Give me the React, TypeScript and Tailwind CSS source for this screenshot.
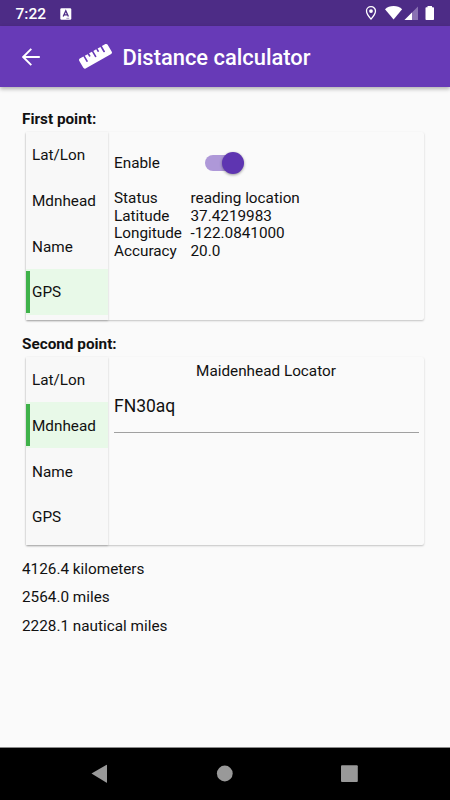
import React from "react";
import { FaRuler } from "react-icons/fa";

const TABS = ["Lat/Lon", "Mdnhead", "Name", "GPS"];

function StatusBar() {
  return (
    <div className="flex h-[26px] items-center bg-[#4d2c86] pl-[15.5px] pr-[15px] text-white">
      <span className="w-[44.5px] pt-[3px] text-[15.5px] font-medium leading-[23px]">7:22</span>
      <svg className="mt-[1px] h-[12px] w-[12px]" viewBox="0 0 12 12">
        <rect x="0.3" y="0.3" width="11" height="11.4" rx="1.2" fill="#fff" />
        <path d="M3.2 8.6 5.8 2.8 8.4 8.6M4.2 6.8h3.2" fill="none" stroke="#4d2c86" strokeWidth="1.3" />
        <path d="M6.4 10.3h2.8" stroke="#4d2c86" strokeWidth="0.5" />
      </svg>
      <div className="flex-1" />
      <svg className="h-[26px] w-[72px]" viewBox="363 0 72 26">
        <path d="M371 6.7c-2.6 0-4.5 2-4.5 4.4 0 3.2 4.5 8 4.5 8s4.5-4.8 4.5-8c0-2.4-1.9-4.4-4.5-4.4z" fill="none" stroke="#fff" strokeWidth="1.3" />
        <circle cx="371" cy="11.1" r="1.9" fill="#fff" />
        <path d="M385 9.2C387.2 7.2 390.2 6 393.6 6s6.4 1.2 8.5 3.2L393.6 19.4z" fill="#fff" />
        <path d="M418 6.5V20H404.5z" fill="#8a72b3" />
        <path d="M412 12.5V20h-7.5z" fill="#fff" />
        <path d="M427.5 7.2V6h4.5v1.2h1.2a.8.8 0 0 1 .8.8v11.2a.8.8 0 0 1-.8.8h-6.9a.8.8 0 0 1-.8-.8V8a.8.8 0 0 1 .8-.8z" fill="#fff" />
      </svg>
    </div>
  );
}

function AppBar() {
  return (
    <header className="relative flex h-[61px] items-center bg-[#673ab7] pl-[22px] text-white shadow-[0_2px_4px_rgba(0,0,0,0.3)]">
      <svg className="h-[18px] w-[18px]" viewBox="0 0 18 18" fill="none" stroke="#fff" strokeWidth="1.9">
        <path d="M17.8 9H1.5M9.3 0.9 1.2 9l8.1 8.1" />
      </svg>
      <FaRuler className="ml-[38.5px] h-[26.5px] w-[33px]" />
      <h1 className="ml-[11px] pt-[2px] text-[21.9px] font-medium leading-[26px]">Distance calculator</h1>
    </header>
  );
}

function PointCard({ title, active, children }: { title: string; active: string; children: React.ReactNode }) {
  return (
    <section>
      <h2 className="h-[21.5px] text-[15.3px] font-bold leading-[18px]">{title}</h2>
      <div className="ml-[4px] mr-[4px] flex h-[188px] rounded-[2px] bg-[#fafafa] shadow-[0_1px_2px_rgba(0,0,0,0.22)]">
        <nav className="mr-[0.6px] w-[82.4px] shrink-0 bg-[#f8f8f8] shadow-[0_1px_2px_rgba(0,0,0,0.2)]">
          {TABS.map((tab) => (
            <div key={tab} className={`flex h-[45.9px] items-center ${tab === active ? "bg-[#e8f9e8]" : ""}`}>
              <span className={`mr-[2.4px] h-[42px] w-[3.6px] ${tab === active ? "bg-[#3fb24a]" : ""}`} />
              <span className="pt-[2.2px]">{tab}</span>
            </div>
          ))}
        </nav>
        <div className="flex-1 px-[5px] pt-[0.5px]">{children}</div>
      </div>
    </section>
  );
}

function Toggle() {
  return (
    <span className="relative block h-[22px] w-[39px]">
      <span className="absolute left-0 top-[3px] h-[16px] w-[36px] rounded-full bg-[#ae98d8]" />
      <span className="absolute right-0 top-0 h-[22px] w-[22px] rounded-full bg-[#5e35b1] shadow-[0_1px_3px_rgba(0,0,0,0.4)]" />
    </span>
  );
}

const READINGS = [
  ["Status", "reading location"],
  ["Latitude", "37.4219983"],
  ["Longitude", "-122.0841000"],
  ["Accuracy", "20.0"],
];

export default function App() {
  return (
    <div className="flex h-[800px] w-[450px] flex-col overflow-hidden bg-[#fafafa] font-[Roboto,sans-serif] text-[15.3px] leading-[17.5px] text-[#111]">
      <StatusBar />
      <AppBar />
      <main className="flex-1 px-[22px] pt-[23px]">
        <PointCard title="First point:" active="GPS">
          <div className="flex h-[58px] items-center pt-[4px]">
            <span className="w-[91px] pt-[2px]">Enable</span>
            <Toggle />
          </div>
          <dl className="grid grid-cols-[76.5px_1fr]">
            {READINGS.map(([name, value]) => (
              <React.Fragment key={name}>
                <dt>{name}</dt>
                <dd>{value}</dd>
              </React.Fragment>
            ))}
          </dl>
        </PointCard>
        <div className="h-[15.5px]" />
        <PointCard title="Second point:" active="Mdnhead">
          <p className="pr-[1px] pt-[6px] text-center">Maidenhead Locator</p>
          <div className="mt-[12px] h-[40px] border-b border-[#a0a0a0] pt-[3px] text-[17.5px] leading-[20px]">FN30aq</div>
        </PointCard>
        <div className="flex flex-col gap-[10.8px] pt-[16.5px]">
          <p>4126.4 kilometers</p>
          <p>2564.0 miles</p>
          <p>2228.1 nautical miles</p>
        </div>
      </main>
      <footer className="h-[53px] border-t border-[#8a8a8a] bg-black">
        <svg className="block h-[52px] w-[450px]" viewBox="0 748 450 52" fill="#999">
          <path d="M91.5 773.5 106.2 765q.8-.4.8.4v16.8q0 .8-.8.4z" />
          <circle cx="224.8" cy="773.5" r="7.9" />
          <rect x="341" y="765.3" width="16.8" height="16.7" rx="1" />
        </svg>
      </footer>
    </div>
  );
}
